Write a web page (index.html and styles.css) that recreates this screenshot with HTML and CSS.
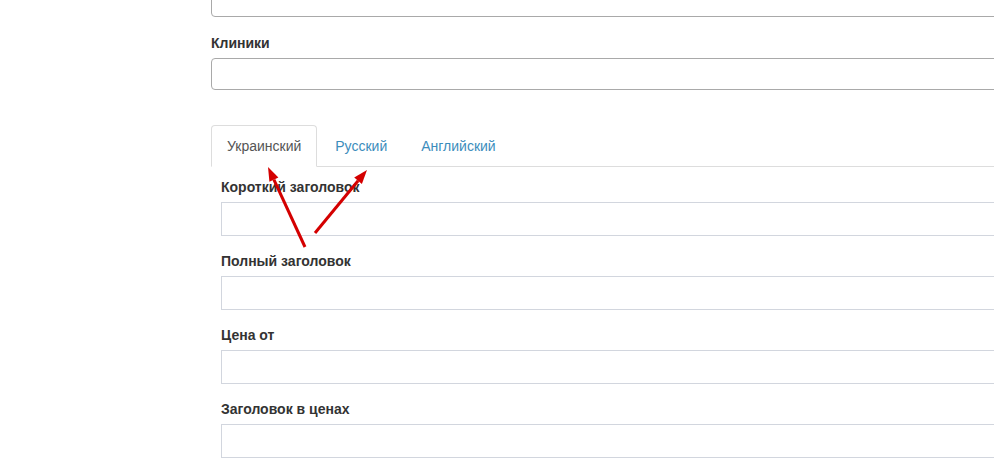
FILE: index.html
```html
<!DOCTYPE html>
<html lang="ru">
<head>
<meta charset="utf-8">
<title>Форма</title>
<link rel="stylesheet" href="styles.css">
</head>
<body>
<div class="page">
  <div class="outer">
    <div class="top-input"></div>
    <div class="group-top">
      <label class="lbl">Клиники</label>
      <div class="top-input"></div>
    </div>
  </div>

  <div class="tabs">
    <ul class="nav">
      <li class="tab active"><span>Украинский</span></li>
      <li class="tab"><span>Русский</span></li>
      <li class="tab"><span>Английский</span></li>
    </ul>
    <div class="tab-content">
      <div class="group"><label class="lbl">Короткий заголовок</label><div class="field"></div></div>
      <div class="group"><label class="lbl">Полный заголовок</label><div class="field"></div></div>
      <div class="group"><label class="lbl">Цена от</label><div class="field"></div></div>
      <div class="group"><label class="lbl">Заголовок в ценах</label><div class="field"></div></div>
    </div>
  </div>

  <svg class="arrows" width="994" height="462" viewBox="0 0 994 462" xmlns="http://www.w3.org/2000/svg">
    <line x1="305" y1="247" x2="273.9" y2="179.7" stroke="#d40000" stroke-width="3"/>
    <polygon points="268,167 278.4,177.6 269.4,181.8" fill="#d40000"/>
    <line x1="315" y1="233" x2="358.1" y2="180.8" stroke="#d40000" stroke-width="3"/>
    <polygon points="367,170 361.9,184 354.2,177.6" fill="#d40000"/>
  </svg>
</div>
</body>
</html>
```

FILE: styles.css
```css
html, body {
  margin: 0;
  padding: 0;
  overflow: hidden;
  background: #fff;
}
body {
  font-family: "Liberation Sans", Arial, sans-serif;
  font-size: 14px;
  color: #333;
}
.page {
  position: relative;
  width: 994px;
  height: 462px;
  overflow: hidden;
}
.outer {
  margin-left: 211px;
  margin-top: -15px;
  width: 900px;
}
.top-input {
  height: 30px;
  border: 1px solid #a9a9a9;
  border-radius: 4px;
  background: #fff;
}
.group-top {
  margin-top: 16px;
}
.lbl {
  display: block;
  font-weight: bold;
  font-size: 14px;
  line-height: 20px;
  margin-bottom: 5px;
  color: #333;
}
.tabs {
  margin-left: 211px;
  margin-top: 35px;
  width: 900px;
}
.nav {
  list-style: none;
  margin: 0;
  padding: 0;
  display: flex;
  border-bottom: 1px solid #ddd;
}
.tab {
  margin-right: 2px;
  margin-bottom: -1px;
  padding: 10px 15px;
  line-height: 20px;
  border: 1px solid transparent;
  border-radius: 4px 4px 0 0;
  color: #3c8dbc;
  font-size: 14px;
}
.tab.active {
  color: #555;
  border-color: #ddd;
  border-bottom-color: #fff;
  background: #fff;
}
.tab-content {
  padding: 10px 10px 0;
}
.group {
  margin-bottom: 15px;
}
.field {
  height: 32px;
  border: 1px solid #d2d6de;
  background: #fff;
}
.arrows {
  position: absolute;
  left: 0;
  top: 0;
  pointer-events: none;
}
```
